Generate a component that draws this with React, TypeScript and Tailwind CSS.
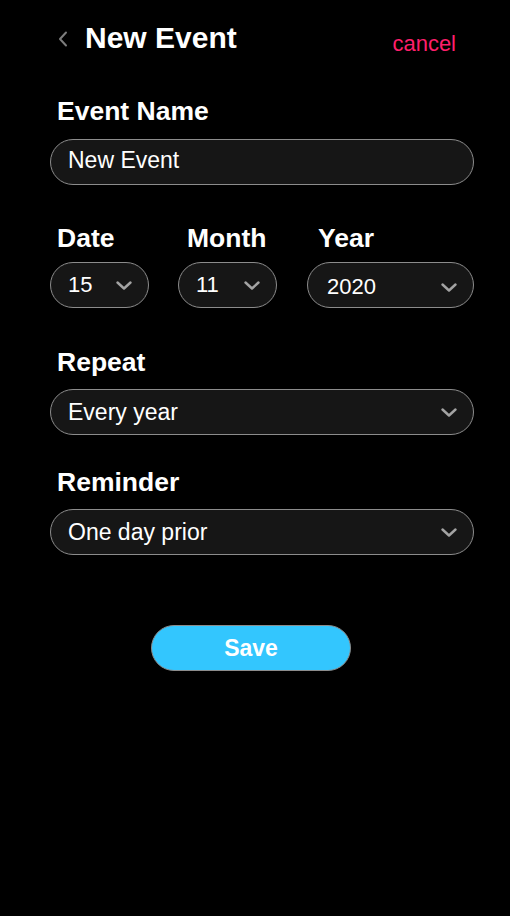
import React from "react";

function Chevron() {
  return (
    <svg width="16" height="9" viewBox="0 0 16 9" fill="none" className="shrink-0">
      <path d="M1.5 1.5 L8 7.5 L14.5 1.5" stroke="#a3a3a3" strokeWidth="2.4" strokeLinecap="round" strokeLinejoin="round" />
    </svg>
  );
}

function Select({ value, pl = "pl-[17px]", size = "text-[23px]" }: { value: string; pl?: string; size?: string }) {
  return (
    <div className={`h-[46px] rounded-full border border-[#8c8c8c] bg-[#161616] flex items-center justify-between ${pl} pr-[16px]`}>
      <span className={`${size} leading-none text-white`}>{value}</span>
      <Chevron />
    </div>
  );
}

export default function App() {
  return (
    <div className="w-[510px] h-[916px] bg-black text-white pt-[20px] pl-[50px] pr-[36px] font-['Liberation_Sans',Arial,sans-serif]">
      <div className="h-[36px] flex items-start">
        <svg width="10" height="16" viewBox="0 0 10 16" fill="none" className="mt-[11px] ml-[8px] shrink-0">
          <path d="M8 1.5 L2 8 L8 14.5" stroke="#7c7c7c" strokeWidth="2" strokeLinecap="round" strokeLinejoin="round" />
        </svg>
        <h1 className="ml-[17px] text-[30px] leading-[36px] font-bold">New Event</h1>
        <span className="ml-auto mr-[18px] mt-[11px] text-[22px] leading-[26px] text-[#ff1f6b]">cancel</span>
      </div>

      <div className="mt-[40px] ml-[7px] text-[26.5px] leading-[30px] font-bold">Event Name</div>
      <div className="mt-[13px] h-[46px] rounded-full border border-[#8c8c8c] bg-[#161616] flex items-center pl-[17px] pb-[4px]">
        <span className="text-[23px] leading-none">New Event</span>
      </div>

      <div className="mt-[38px] flex">
        <div className="w-[99px]">
          <div className="ml-[7px] text-[26.5px] leading-[30px] font-bold">Date</div>
          <div className="mt-[9px]">
            <Select value="15" size="text-[22px]" />
          </div>
        </div>
        <div className="w-[99px] ml-[29px]">
          <div className="ml-[9px] text-[26.5px] leading-[30px] font-bold">Month</div>
          <div className="mt-[9px]">
            <Select value="11" size="text-[22px]" />
          </div>
        </div>
        <div className="flex-1 ml-[30px]">
          <div className="ml-[11px] text-[26.5px] leading-[30px] font-bold">Year</div>
          <div className="mt-[9px]">
            <Select value="2020" pl="pl-[19px] pt-[4px]" size="text-[22px]" />
          </div>
        </div>
      </div>

      <div className="mt-[39px] ml-[7px] text-[26.5px] leading-[30px] font-bold">Repeat</div>
      <div className="mt-[12px]">
        <Select value="Every year" />
      </div>

      <div className="mt-[32px] ml-[7px] text-[26.5px] leading-[30px] font-bold">Reminder</div>
      <div className="mt-[12px]">
        <Select value="One day prior" />
      </div>

      <button className="mt-[70px] ml-[101px] w-[200px] h-[46px] rounded-full border border-[#8c8c8c] bg-[#33c6fe] flex items-center justify-center">
        <span className="text-[23px] leading-none font-bold text-white">Save</span>
      </button>
    </div>
  );
}
